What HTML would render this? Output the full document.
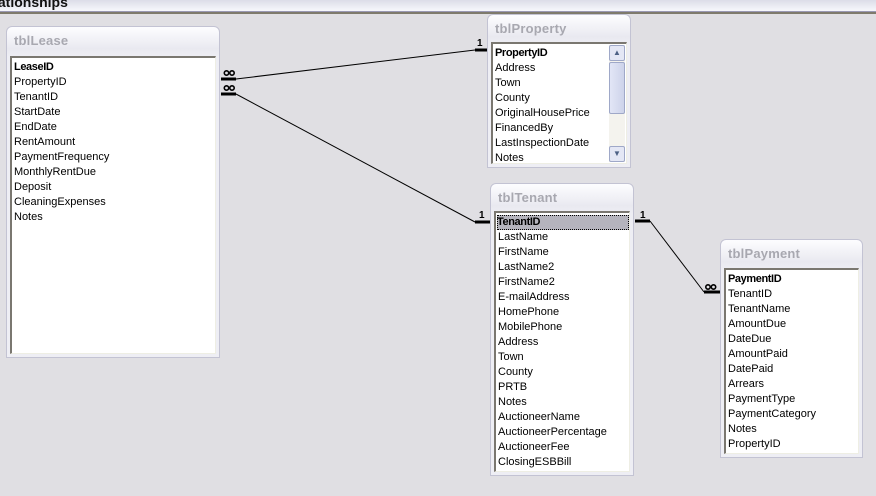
<!DOCTYPE html>
<html><head><meta charset="utf-8"><style>
*{margin:0;padding:0;box-sizing:border-box}
body{width:876px;height:496px;background:#e0dfe3;position:relative;overflow:hidden;font-family:"Liberation Sans",sans-serif;font-size:11px;color:#000}
.tb{position:absolute;left:0;top:0;width:876px;height:12px;background:linear-gradient(#dcdde8,#f7f8fc);border-bottom:1px solid #9a99b4}
.tb2{position:absolute;left:0;top:12px;width:876px;height:2px;background:#7e7a6c}
.tb span{position:absolute;left:-6px;top:-6px;font-weight:bold;font-size:14px;color:#111}
.box{position:absolute;border:1px solid #c3c3d3;border-radius:6px 6px 0 0;background:linear-gradient(#fdfdff,#e9e9f0 22px,#eeeef4 30px);}
.box .t{position:absolute;left:7px;top:6px;font-size:13px;color:#a8a8b0;font-weight:bold;letter-spacing:0.2px}
.list{position:absolute;left:3px;right:3px;bottom:3px;background:#fff;border-top:2px solid #7a7770;border-left:2px solid #7a7770;border-right:1px solid #eeeee4;border-bottom:1px solid #eeeee4;padding-left:2px;padding-top:2px;overflow:hidden}
.list .r{height:15px;line-height:15px;white-space:nowrap}
.list .k{font-weight:bold;letter-spacing:-0.4px}
.sel{background:#b5b4bd;outline:1px dotted #000;outline-offset:-1px;margin-left:-1px}
.sb{position:absolute;right:1px;top:1px;bottom:1px;width:16px;background:#f4f3ee}
.sbb{position:absolute;left:0;width:16px;height:16px;border:1px solid #9fa8c8;border-radius:2px;background:#e4e7f5;font-size:8px;text-align:center;line-height:14px;color:#4d6185}
.thumb{position:absolute;left:0;top:17px;width:16px;height:52px;border:1px solid #9fa8c8;border-radius:2px;background:linear-gradient(90deg,#e2e6f6,#cdd3ea)}
</style></head><body>
<div class="tb"><span>lationships</span></div><div class="tb2"></div>

<svg width="876" height="496" style="position:absolute;left:0;top:0">
<g stroke="#000" fill="none">
<line x1="236" y1="79" x2="475" y2="50" stroke-width="1"/>
<line x1="236" y1="94" x2="475" y2="222" stroke-width="1"/>
<line x1="650" y1="221" x2="704" y2="292" stroke-width="1"/>
<g stroke-width="3">
<line x1="221" y1="79" x2="236" y2="79"/><line x1="221" y1="94" x2="236" y2="94"/>
<line x1="475" y1="50" x2="487" y2="50"/><line x1="475" y1="222" x2="490" y2="222"/>
<line x1="635" y1="221" x2="650" y2="221"/><line x1="704" y1="292" x2="720" y2="292"/>
</g>
<g stroke-width="1.6">
<circle cx="226.5" cy="73" r="2.2"/><circle cx="232" cy="73" r="2.2"/>
<circle cx="226.5" cy="88" r="2.2"/><circle cx="232" cy="88" r="2.2"/>
<circle cx="708" cy="287" r="2.2"/><circle cx="713.5" cy="287" r="2.2"/>
</g></g>
<g font-family="Liberation Sans" font-size="10" font-weight="bold">
<text x="477" y="46">1</text><text x="479" y="218">1</text><text x="640" y="218">1</text></g>
</svg>

<div class="box" style="left:6px;top:26px;width:214px;height:332px"><div class="t">tblLease</div>
<div class="list" style="top:29px">
<div class="r k">LeaseID</div><div class="r">PropertyID</div><div class="r">TenantID</div><div class="r">StartDate</div><div class="r">EndDate</div><div class="r">RentAmount</div><div class="r">PaymentFrequency</div><div class="r">MonthlyRentDue</div><div class="r">Deposit</div><div class="r">CleaningExpenses</div><div class="r">Notes</div></div></div>

<div class="box" style="left:487px;top:14px;width:144px;height:154px"><div class="t">tblProperty</div>
<div class="list" style="top:27px">
<div class="r k">PropertyID</div><div class="r">Address</div><div class="r">Town</div><div class="r">County</div><div class="r">OriginalHousePrice</div><div class="r">FinancedBy</div><div class="r">LastInspectionDate</div><div class="r">Notes</div>
<div class="sb"><div class="sbb" style="top:0">▲</div><div class="thumb"></div><div class="sbb" style="bottom:0">▼</div></div></div></div>

<div class="box" style="left:490px;top:183px;width:144px;height:293px"><div class="t">tblTenant</div>
<div class="list" style="top:27px">
<div class="r k sel">TenantID</div><div class="r">LastName</div><div class="r">FirstName</div><div class="r">LastName2</div><div class="r">FirstName2</div><div class="r">E-mailAddress</div><div class="r">HomePhone</div><div class="r">MobilePhone</div><div class="r">Address</div><div class="r">Town</div><div class="r">County</div><div class="r">PRTB</div><div class="r">Notes</div><div class="r">AuctioneerName</div><div class="r">AuctioneerPercentage</div><div class="r">AuctioneerFee</div><div class="r">ClosingESBBill</div></div></div>

<div class="box" style="left:720px;top:239px;width:143px;height:219px"><div class="t">tblPayment</div>
<div class="list" style="top:28px">
<div class="r k">PaymentID</div><div class="r">TenantID</div><div class="r">TenantName</div><div class="r">AmountDue</div><div class="r">DateDue</div><div class="r">AmountPaid</div><div class="r">DatePaid</div><div class="r">Arrears</div><div class="r">PaymentType</div><div class="r">PaymentCategory</div><div class="r">Notes</div><div class="r">PropertyID</div></div></div>
</body></html>
